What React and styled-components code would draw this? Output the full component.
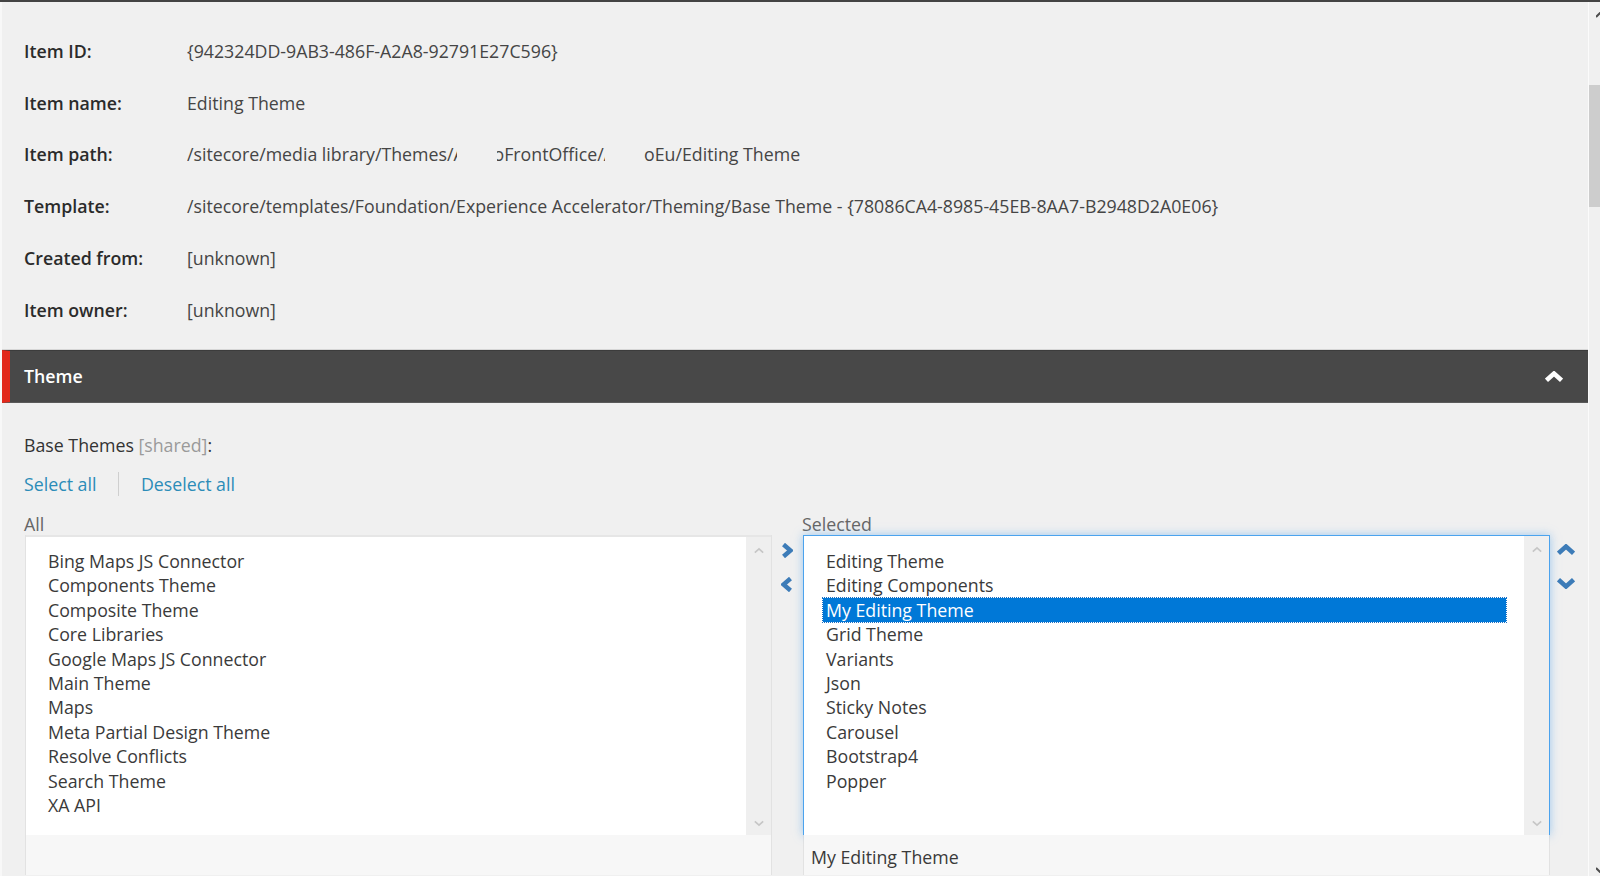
import React from "react";
import styled, { createGlobalStyle } from "styled-components";

const Global = createGlobalStyle`
  html, body { margin: 0; padding: 0; height: 876px; overflow: hidden; background: #f0f0f0; }
  #root { height: 876px; }
  * { box-sizing: border-box; }
`;

const Page = styled.div`
  display: flex;
  height: 876px;
  overflow: hidden;
  border-top: 2px solid #444;
  background: #f0f0f0;
  color: #333;
  font-family: "Open Sans", "Liberation Sans", sans-serif;
  font-size: 17.75px;
`;
const Main = styled.main`
  flex: 0 0 1589px;
  border-left: 2px solid #f8f8f8;
  border-right: 1px solid #fbfbfb;
  overflow: hidden;
`;
const InfoList = styled.dl`
  margin: 0;
  padding: 23px 0 0 22px;
`;
const InfoRow = styled.div`
  display: grid;
  grid-template-columns: 163px 1fr;
  height: 51.75px;
  align-items: center;
`;
const InfoLabel = styled.dt`
  font-weight: 600;
  color: #2b2b2b;
`;
const InfoValue = styled.dd`
  margin: 0;
  color: #454545;
  display: flex;
  white-space: nowrap;
`;
const Clipped = styled.span`
  flex: none;
  overflow: hidden;
  width: ${(p) => p.$width}px;
  margin-right: ${(p) => p.$gap || 0}px;
`;
const ClippedInner = styled.span`
  display: block;
  margin-left: ${(p) => p.$shift || 0}px;
`;

const SectionHeader = styled.header`
  display: flex;
  align-items: center;
  justify-content: space-between;
  height: 53px;
  margin-top: 14px;
  padding: 0 25px 0 14px;
  background: #484848;
  border-left: 8px solid #e2281b;
  border-top: 1px solid #3c3c3c;
  border-bottom: 1px solid #5a5a5a;
  box-shadow: 0 -1px 0 #d6d6d6;
  color: #fff;
  font-weight: 600;
`;
const SectionBody = styled.section`
  padding: 30px 0 0 22px;
`;
const FieldTitle = styled.div`
  line-height: 24px;
  color: #333;
`;
const Shared = styled.span`
  color: #9a9a9a;
`;
const LinkRow = styled.nav`
  display: flex;
  align-items: center;
  height: 24px;
  margin-top: 15px;
`;
const ActionLink = styled.a`
  color: #2b8cb8;
  padding-right: ${(p) => (p.$first ? 22 : 0)}px;
  margin-right: ${(p) => (p.$first ? 21.5 : 0)}px;
  border-right: ${(p) => (p.$first ? "1px solid #cfcfcf" : "none")};
  line-height: 24px;
`;
const Picker = styled.div`
  display: grid;
  grid-template-columns: 747px 31px 747px 38px;
  margin: 15px 0 0 1px;
`;
const Column = styled.div`
  display: flex;
  flex-direction: column;
  height: 364px;
`;
const ColumnLabel = styled.div`
  height: 24px;
  line-height: 26px;
  color: #666;
  margin-left: -1px;
`;
const ListBox = styled.div`
  flex: 1;
  display: flex;
  flex-direction: column;
  background: #f7f7f7;
  border: 1px solid #e2e2e2;
  border-top: none;
  border-bottom: none;
`;
const ListFrame = styled.div`
  display: flex;
  height: 300px;
  flex: none;
  background: #fff;
  margin: 0 ${(p) => (p.$focused ? -1 : 0)}px;
  border: ${(p) => (p.$focused ? "1px solid #4ba3ee" : "none")};
  border-top: ${(p) => (p.$focused ? "1px solid #4ba3ee" : "2px solid #e6e6e6")};
  border-bottom: none;
  box-shadow: ${(p) => (p.$focused ? "0 0 9px rgba(90, 165, 235, 0.55)" : "none")};
`;
const Options = styled.ul`
  flex: 1;
  list-style: none;
  margin: 0;
  padding: ${(p) => (p.$focused ? 13.5 : 12.5)}px 18px 0 19px;
`;
const Option = styled.li`
  height: 24.4px;
  line-height: 24.4px;
  padding-left: 3px;
  color: ${(p) => (p.$active ? "#fff" : "#3a3a3a")};
  background: ${(p) => (p.$active ? "#0078d7" : "transparent")};
  outline: ${(p) => (p.$active ? "1px dotted #1a6fc4" : "none")};
`;
const ListScroll = styled.div`
  flex: 0 0 25px;
  display: flex;
  flex-direction: column;
  align-items: center;
  justify-content: space-between;
  padding: 10px 0 8px;
  background: #efefef;
`;
const Footer = styled.div`
  position: relative;
  flex: 1;
  padding: 10px 0 0 7px;
  line-height: 24px;
  background: #f7f7f7;
  color: #3a3a3a;
`;
const Gutter = styled.div`
  display: flex;
  flex-direction: column;
  gap: ${(p) => p.$gap}px;
  padding: ${(p) => p.$top}px 0 0 ${(p) => p.$pad}px;
`;
const PageScroll = styled.aside`
  flex: 1;
  display: flex;
  flex-direction: column;
  overflow: hidden;
  padding-top: 10px;
`;
const Thumb = styled.div`
  width: 11px;
  height: 122px;
  margin-top: 67px;
  background: #cdcdcd;
`;
const PageArrow = styled.svg`
  flex: none;
  margin-left: 7px;
  color: #4d4d4d;
`;
const PageArrowBottom = styled(PageArrow)`
  margin-top: auto;
  margin-bottom: 3px;
`;

const Chevron = ({ dir, w, h, sw, color }) => {
  const paths = {
    up: "M1.5 9.3 L9 2.5 L16.5 9.3",
    down: "M1.5 1.7 L9 8.5 L16.5 1.7",
    right: "M2.5 1.5 L9.5 7.5 L2.5 13.5",
    left: "M9.5 1.5 L2.5 7.5 L9.5 13.5",
  };
  const box = dir === "up" || dir === "down" ? "0 0 18 11" : "0 0 12 15";
  return (
    <svg width={w} height={h} viewBox={box} fill="none" stroke={color} strokeWidth={sw} style={{ flex: "none", display: "block" }}>
      <path d={paths[dir]} />
    </svg>
  );
};

const info = [
  ["Item ID:", "{942324DD-9AB3-486F-A2A8-92791E27C596}"],
  ["Item name:", "Editing Theme"],
  ["Item path:", null],
  ["Template:", "/sitecore/templates/Foundation/Experience Accelerator/Theming/Base Theme - {78086CA4-8985-45EB-8AA7-B2948D2A0E06}"],
  ["Created from:", "[unknown]"],
  ["Item owner:", "[unknown]"],
];
const allThemes = ["Bing Maps JS Connector","Components Theme","Composite Theme","Core Libraries","Google Maps JS Connector","Main Theme","Maps","Meta Partial Design Theme","Resolve Conflicts","Search Theme","XA API"];
const selected = ["Editing Theme","Editing Components","My Editing Theme","Grid Theme","Variants","Json","Sticky Notes","Carousel","Bootstrap4","Popper"];

const BLUE = "#3d7cb8";
const GREY = "#c6c6c6";

const Scroller = () => (
  <ListScroll>
    <Chevron dir="up" w={10} h={7} sw={3} color={GREY} />
    <Chevron dir="down" w={10} h={7} sw={3} color={GREY} />
  </ListScroll>
);

export default function App() {
  return (
    <>
      <Global />
      <Page>
        <Main>
          <InfoList>
            {info.map(([k, v]) => (
              <InfoRow key={k}>
                <InfoLabel>{k}</InfoLabel>
                <InfoValue>
                  {v || (
                    <>
                      <Clipped $width={270} $gap={40}><ClippedInner>/sitecore/media library/Themes/A</ClippedInner></Clipped>
                      <Clipped $width={108} $gap={39}><ClippedInner $shift={-3.5}>oFrontOffice/A</ClippedInner></Clipped>
                      <span>oEu/Editing Theme</span>
                    </>
                  )}
                </InfoValue>
              </InfoRow>
            ))}
          </InfoList>
          <SectionHeader>
            Theme
            <Chevron dir="up" w={18} h={11} sw={4.5} color="#fff" />
          </SectionHeader>
          <SectionBody>
            <FieldTitle>Base Themes <Shared>[shared]</Shared>:</FieldTitle>
            <LinkRow>
              <ActionLink $first>Select all</ActionLink>
              <ActionLink>Deselect all</ActionLink>
            </LinkRow>
            <Picker>
              <Column>
                <ColumnLabel>All</ColumnLabel>
                <ListBox>
                  <ListFrame>
                    <Options>{allThemes.map((t) => <Option key={t}>{t}</Option>)}</Options>
                    <Scroller />
                  </ListFrame>
                </ListBox>
              </Column>
              <Gutter $pad={9} $top={32} $gap={19}>
                <Chevron dir="right" w={12} h={15} sw={4.5} color={BLUE} />
                <Chevron dir="left" w={12} h={15} sw={4.5} color={BLUE} />
              </Gutter>
              <Column>
                <ColumnLabel>Selected</ColumnLabel>
                <ListBox>
                  <ListFrame $focused>
                    <Options $focused>{selected.map((t, i) => <Option key={t} $active={i === 2}>{t}</Option>)}</Options>
                    <Scroller />
                  </ListFrame>
                  <Footer>My Editing Theme</Footer>
                </ListBox>
              </Column>
              <Gutter $pad={7} $top={33} $gap={23}>
                <Chevron dir="up" w={18} h={11} sw={4.5} color={BLUE} />
                <Chevron dir="down" w={18} h={11} sw={4.5} color={BLUE} />
              </Gutter>
            </Picker>
          </SectionBody>
        </Main>
        <PageScroll>
          <PageArrow width="8" height="6" viewBox="0 0 8 6" fill="none" stroke="currentColor" strokeWidth="2"><path d="M0 5 L4 1 L8 5" /></PageArrow>
          <Thumb />
          <PageArrowBottom width="8" height="6" viewBox="0 0 8 6" fill="none" stroke="currentColor" strokeWidth="2"><path d="M0 1 L4 5 L8 1" /></PageArrowBottom>
        </PageScroll>
      </Page>
    </>
  );
}
